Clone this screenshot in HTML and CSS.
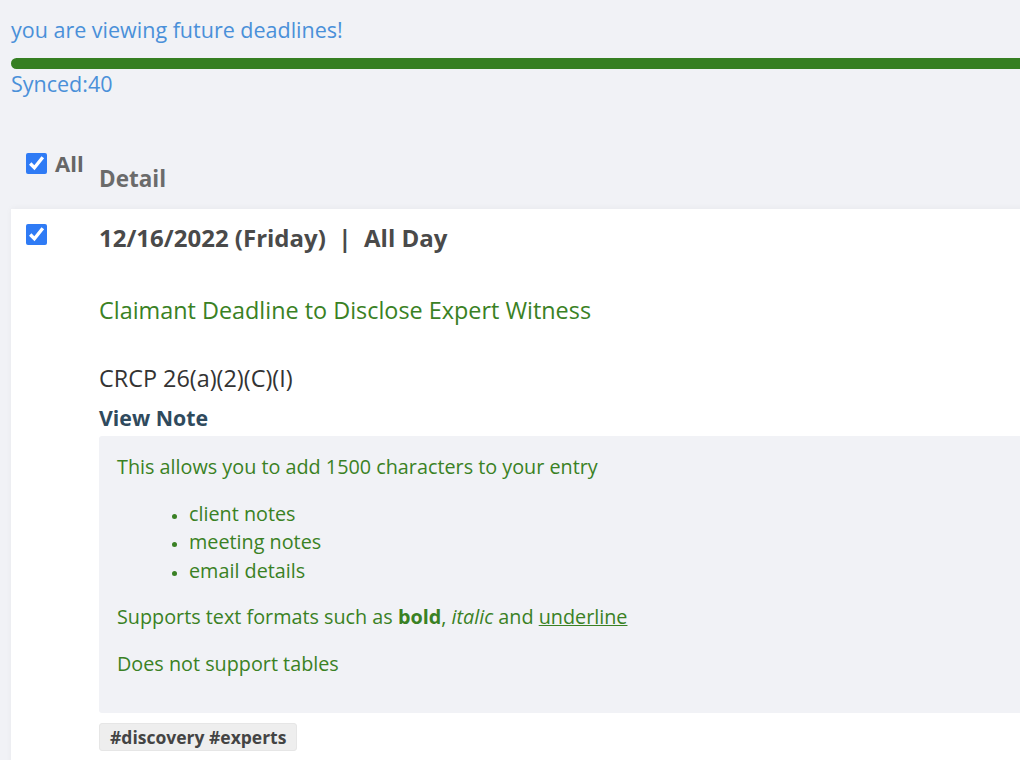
FILE: index.html
```html
<!DOCTYPE html>
<html>
<head>
<meta charset="utf-8">
<link rel="stylesheet" href="styles.css">
</head>
<body>
<div class="page">
  <div class="notice">you are viewing future deadlines!</div>
  <div class="progress"><div class="progress-fill"></div></div>
  <div class="synced">Synced:40</div>

  <div class="header">
    <label class="all"><input type="checkbox" checked><span>All</span></label>
    <div class="detail-head">Detail</div>
  </div>

  <div class="card">
    <div class="check-col"><input type="checkbox" checked></div>
    <div class="content">
      <div class="date">12/16/2022 (Friday) &nbsp;|&nbsp; All Day</div>
      <div class="title">Claimant Deadline to Disclose Expert Witness</div>
      <div class="rule">CRCP 26(a)(2)(C)(I)</div>
      <div class="view-note">View Note</div>
      <div class="note">
        <p>This allows you to add 1500 characters to your entry</p>
        <ul>
          <li>client notes</li>
          <li>meeting notes</li>
          <li>email details</li>
        </ul>
        <p>Supports text formats such as <b>bold</b>, <i>italic</i> and <u>underline</u></p>
        <p>Does not support tables</p>
      </div>
      <div class="tag">#discovery #experts</div>
    </div>
  </div>
</div>
</body>
</html>
```

FILE: styles.css
```css
html, body {
  margin: 0;
  padding: 0;
  background: #f1f2f6;
  overflow: hidden;
}
body {
  font-family: "Open Sans", "DejaVu Sans", sans-serif;
}
.page {
  width: 1060px;
  padding: 15px 0 0 11px;
}
.notice {
  color: #4a90d9;
  font-size: 21.5px;
  line-height: 30px;
}
.progress {
  margin-top: 13px;
  height: 11px;
  background: #e0e0e0;
  border-radius: 6px;
  overflow: hidden;
}
.progress-fill {
  height: 100%;
  width: 100%;
  background: #367f22;
}
.synced {
  color: #4a90d9;
  font-size: 21.5px;
  line-height: 30px;
}
.header {
  display: flex;
  align-items: flex-start;
  margin-top: 52px;
  padding-left: 15px;
  height: 58px;
}
.all {
  display: flex;
  align-items: center;
  gap: 8px;
  font-size: 22px;
  font-weight: 700;
  color: #666;
  width: 73px;
  line-height: 24px;
}
.detail-head {
  font-size: 22.5px;
  font-weight: 700;
  color: #6b6b6b;
  margin-top: 16px;
  line-height: 24px;
}
input[type="checkbox"] {
  width: 21px;
  height: 21px;
  margin: 0;
  accent-color: #2f7bf5;
}
.card {
  display: flex;
  background: #fff;
  box-shadow: 0 -1px 6px rgba(0,0,0,0.04);
  padding: 14px 0 10px 15px;
  min-height: 600px;
}
.check-col {
  width: 73px;
  padding-top: 1px;
}
.content {
  flex: 1;
}
.date {
  font-size: 24px;
  font-weight: 700;
  color: #4a4a4a;
  line-height: 30px;
}
.title {
  margin-top: 42px;
  font-size: 23.4px;
  color: #3a8124;
  line-height: 30px;
}
.rule {
  margin-top: 38px;
  font-size: 23.4px;
  color: #333;
  line-height: 30px;
}
.view-note {
  margin-top: 10px;
  font-size: 21.3px;
  font-weight: 700;
  color: #2f4a5d;
  line-height: 30px;
}
.note {
  margin-top: 3px;
  background: #f1f2f6;
  color: #3a8124;
  font-size: 19.8px;
  line-height: 28.5px;
  padding: 17px 18px 35px;
  border-radius: 3px 0 0 3px;
}
.note p {
  margin: 0;
}
.note p + p {
  margin-top: 18px;
}
.note ul {
  margin: 18px 0 18px;
  padding-left: 72px;
}
.note li::marker {
  font-size: 15px;
}
.tag {
  width: fit-content;
  margin-top: 10px;
  background: #eeeeee;
  border: 1px solid #e6e6e6;
  border-radius: 3px;
  color: #444;
  font-size: 17.5px;
  font-weight: 700;
  padding: 0 10px;
  line-height: 26px;
}
```
